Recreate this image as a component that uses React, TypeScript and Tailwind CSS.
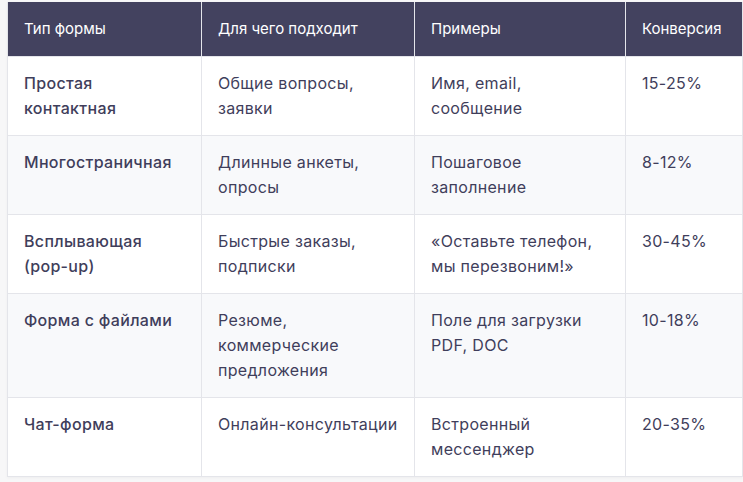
import React from "react";

const rows = [
  { type: "Простая контактная", use: "Общие вопросы, заявки", ex: "Имя, email, сообщение", conv: "15-25%" },
  { type: "Многостраничная", use: "Длинные анкеты, опросы", ex: "Пошаговое заполнение", conv: "8-12%" },
  { type: "Всплывающая (pop-up)", use: "Быстрые заказы, подписки", ex: "«Оставьте телефон, мы перезвоним!»", conv: "30-45%" },
  { type: "Форма с файлами", use: "Резюме, коммерческие предложения", ex: "Поле для загрузки PDF, DOC", conv: "10-18%" },
  { type: "Чат-форма", use: "Онлайн-консультации", ex: "Встроенный мессенджер", conv: "20-35%" },
];

export default function App() {
  return (
    <div className="min-h-[482px] bg-[#f7f7f8] pt-[2px] pl-[7px] pr-[1px] font-['Inter',sans-serif]">
      <table className="w-[735px] table-fixed border-collapse bg-white text-[16px] leading-[25px] text-[#3f3e5b] shadow-[0_1px_3px_rgba(0,0,0,0.04)]">
        <colgroup>
          <col className="w-[194px]" />
          <col className="w-[213px]" />
          <col className="w-[211px]" />
          <col className="w-[117px]" />
        </colgroup>
        <thead>
          <tr className="bg-[#43425f] text-white">
            {["Тип формы", "Для чего подходит", "Примеры", "Конверсия"].map(h => (
              <th key={h} className="h-[54px] border-x border-[#e4e5ea] px-4 text-left text-[15px] font-normal">{h}</th>
            ))}
          </tr>
        </thead>
        <tbody className="tracking-[0.02em]">
          {rows.map((r, i) => (
            <tr key={r.type} className={i % 2 === 1 ? "bg-[#f8f9fb]" : "bg-white"}>
              <td className="border border-[#e4e5ea] px-4 py-[14px] align-top font-medium">{r.type}</td>
              <td className="border border-[#e4e5ea] px-4 py-[14px] align-top">{r.use}</td>
              <td className="border border-[#e4e5ea] px-4 py-[14px] align-top">{r.ex}</td>
              <td className="border border-[#e4e5ea] px-4 py-[14px] align-top">{r.conv}</td>
            </tr>
          ))}
        </tbody>
      </table>
    </div>
  );
}
